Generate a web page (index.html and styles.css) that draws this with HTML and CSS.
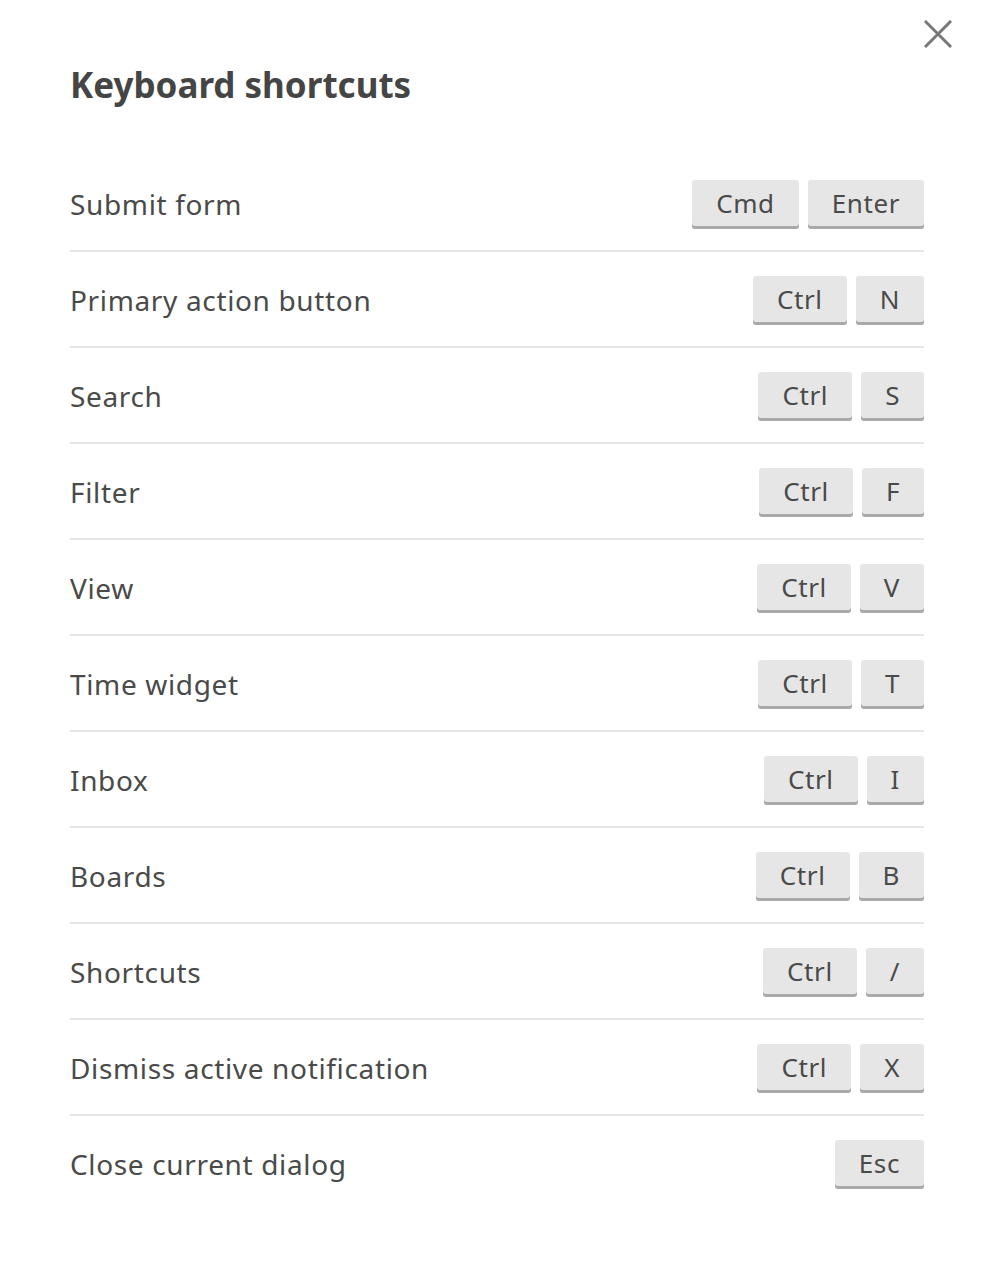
FILE: index.html
```html
<!DOCTYPE html>
<html>
<head>
<meta charset="utf-8">
<link rel="stylesheet" href="styles.css">
</head>
<body>
<div class="dialog">
  <button class="close" aria-label="Close">
    <svg viewBox="0 0 28 28" width="28" height="28"><path d="M2 2 L26 26 M26 2 L2 26" stroke="#787878" stroke-width="3" stroke-linecap="square" fill="none"/></svg>
  </button>
  <h1 class="title">Keyboard shortcuts</h1>
  <ul class="list">
    <li class="row"><span class="label">Submit form</span><span class="keys"><kbd class="key">Cmd</kbd><kbd class="key">Enter</kbd></span></li>
    <li class="row"><span class="label">Primary action button</span><span class="keys"><kbd class="key">Ctrl</kbd><kbd class="key">N</kbd></span></li>
    <li class="row"><span class="label">Search</span><span class="keys"><kbd class="key">Ctrl</kbd><kbd class="key">S</kbd></span></li>
    <li class="row"><span class="label">Filter</span><span class="keys"><kbd class="key">Ctrl</kbd><kbd class="key">F</kbd></span></li>
    <li class="row"><span class="label">View</span><span class="keys"><kbd class="key">Ctrl</kbd><kbd class="key">V</kbd></span></li>
    <li class="row"><span class="label">Time widget</span><span class="keys"><kbd class="key">Ctrl</kbd><kbd class="key">T</kbd></span></li>
    <li class="row"><span class="label">Inbox</span><span class="keys"><kbd class="key">Ctrl</kbd><kbd class="key">I</kbd></span></li>
    <li class="row"><span class="label">Boards</span><span class="keys"><kbd class="key">Ctrl</kbd><kbd class="key">B</kbd></span></li>
    <li class="row"><span class="label">Shortcuts</span><span class="keys"><kbd class="key">Ctrl</kbd><kbd class="key">/</kbd></span></li>
    <li class="row"><span class="label">Dismiss active notification</span><span class="keys"><kbd class="key">Ctrl</kbd><kbd class="key">X</kbd></span></li>
    <li class="row"><span class="label">Close current dialog</span><span class="keys"><kbd class="key">Esc</kbd></span></li>
  </ul>
</div>
</body>
</html>
```
FILE: styles.css
```css
html, body {
  margin: 0;
  padding: 0;
  background: #ffffff;
}
body {
  font-family: "Noto Sans", "DejaVu Sans", sans-serif;
  color: #4a4a4a;
}
.dialog {
  position: relative;
  padding: 60px 64px 0 70px;
}
.close {
  position: absolute;
  top: 20px;
  right: 36px;
  width: 28px;
  height: 28px;
  padding: 0;
  border: 0;
  background: none;
  cursor: pointer;
}
.close svg { display: block; }
.title {
  margin: 0 0 46px;
  font-size: 35px;
  font-weight: 700;
  line-height: 50px;
  color: #454545;
  letter-spacing: 0;
}
.list {
  list-style: none;
  margin: 0;
  padding: 0;
}
.row {
  display: flex;
  align-items: center;
  justify-content: space-between;
  height: 48px;
  padding: 24px 0 22px;
  border-bottom: 2px solid #e6e6e6;
}
.row:last-child { border-bottom: 0; }
.label {
  font-size: 28px;
  letter-spacing: 0.65px;
  color: #4a4a4a;
}
.keys {
  display: flex;
  align-self: flex-start;
  gap: 9px;
}
.key {
  display: flex;
  align-items: center;
  height: 46px;
  padding: 0 24px;
  background: #e6e6e6;
  border-radius: 3px;
  box-shadow: 0 3px 0 #a9a9a9;
  font-family: "Noto Sans", "DejaVu Sans", sans-serif;
  font-size: 26px;
  color: #4a4a4a;
  letter-spacing: 0.6px;
  box-sizing: border-box;
}
```
